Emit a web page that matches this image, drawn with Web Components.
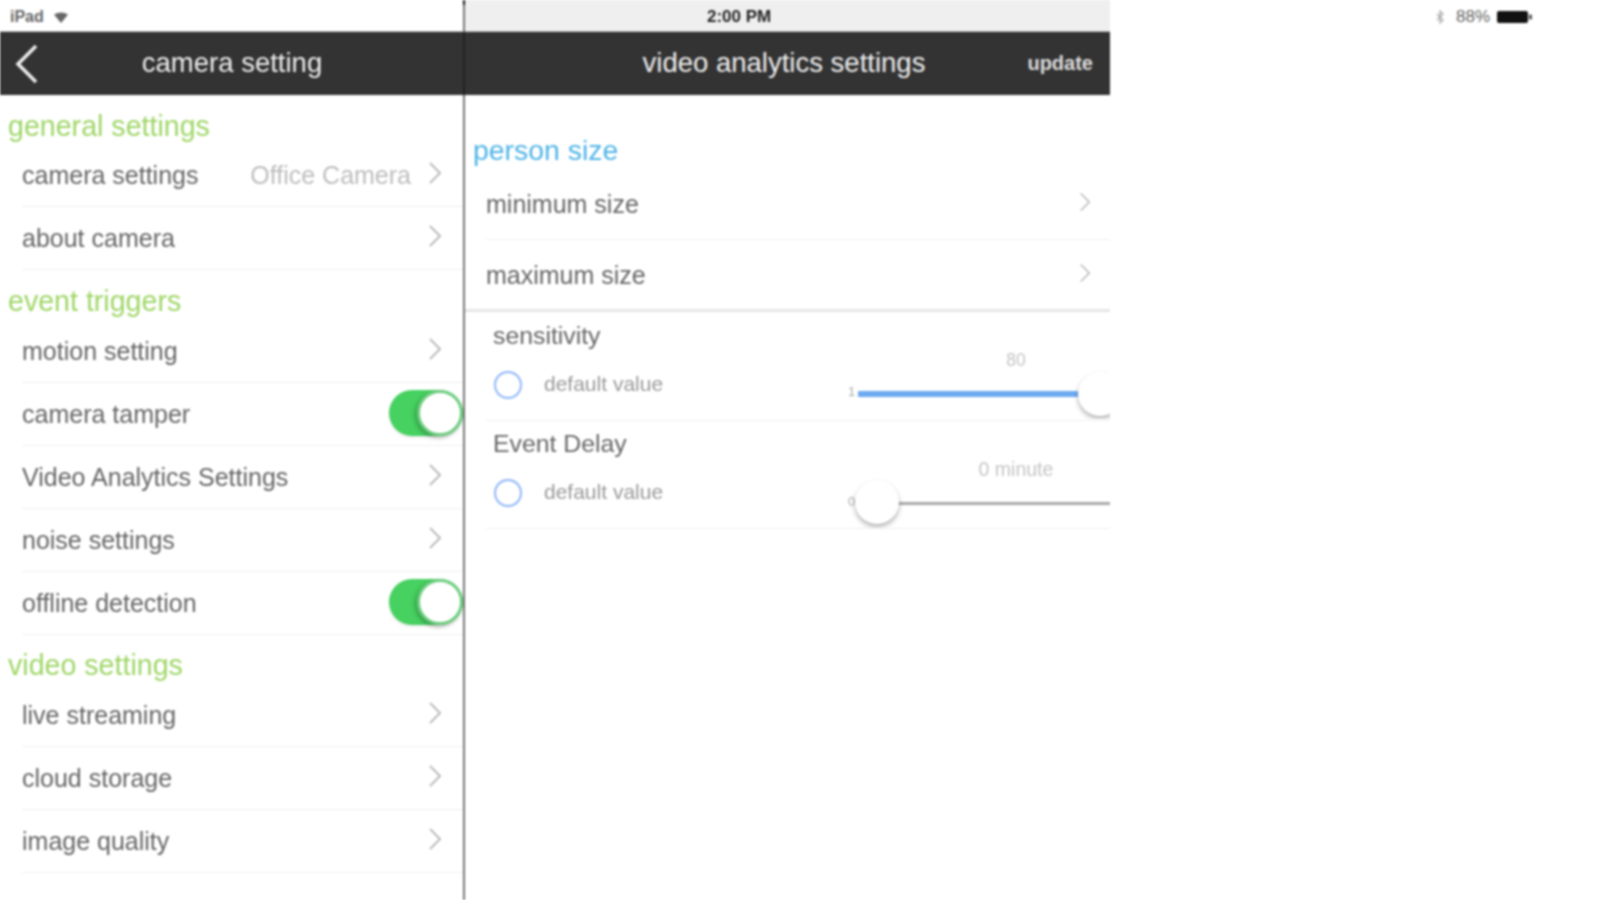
<!DOCTYPE html>
<html lang="en"><head><meta charset="utf-8"><title>camera setting</title>
<style>
html,body{margin:0;background:#fff;overflow:hidden}
body{font-family:"Liberation Sans",Arial,sans-serif}
</style></head>
<body>
<ipad-screen>
  <settings-pane slot="left" style="width:463px">
    <status-strip slot="status"><span>iPad</span><svg width="14" height="11" viewBox="0 0 14 11" style="margin-left:10px"><path d="M0 2.500Q7-1.500 14 2.500L7 11Z" fill="#666"/></svg></status-strip>
    <nav-bar slot="nav" heading="camera setting" back center="232"></nav-bar>
    <section-heading first>general settings</section-heading>
    <setting-row detail="Office Camera" chevron>camera settings</setting-row>
    <setting-row chevron>about camera</setting-row>
    <section-heading>event triggers</section-heading>
    <setting-row chevron>motion setting</setting-row>
    <setting-row toggle>camera tamper</setting-row>
    <setting-row chevron>Video Analytics Settings</setting-row>
    <setting-row chevron>noise settings</setting-row>
    <setting-row toggle>offline detection</setting-row>
    <section-heading>video settings</section-heading>
    <setting-row chevron>live streaming</setting-row>
    <setting-row chevron>cloud storage</setting-row>
    <setting-row chevron>image quality</setting-row>
  </settings-pane>
  <settings-pane slot="right" style="width:645px">
    <status-strip slot="status" tone="grey"><span style="color:#222;font-weight:bold;margin-left:242px;font-size:17px">2:00 PM</span></status-strip>
    <nav-bar slot="nav" heading="video analytics settings" action="update" center="319"></nav-bar>
    <section-heading blue>person size</section-heading>
    <setting-row wide chevron>minimum size</setting-row>
    <setting-row wide chevron thick>maximum size</setting-row>
    <slider-row heading="sensitivity" value="80" min="1" fill="blue"></slider-row>
    <slider-row heading="Event Delay" value="0 minute" min="0" fill="grey"></slider-row>
  </settings-pane>
  <status-strip slot="tail" align="end"><svg width="8" height="14" viewBox="0 0 8 14" style="margin-right:12px"><path d="M1 4l6 6-3 3V1l3 3-6 6" fill="none" stroke="#aaa" stroke-width="1.200"/></svg><span style="color:#666;font-size:17px">88%</span><svg width="36" height="12" viewBox="0 0 36 12" style="margin-left:7px"><rect x="0" y="0" width="31" height="12" rx="2" fill="#111"/><rect x="32" y="3.500" width="3" height="5" rx="1" fill="#555"/></svg></status-strip>
</ipad-screen>
<script>
const shell = (el, html) => { el.attachShadow({mode:'open'}).innerHTML = html; return el.shadowRoot; };
const chevron = (w,h,stroke,color) => `<svg width="${w}" height="${h}" viewBox="0 0 14 24" aria-hidden="true"><path d="M2 2l10 10-10 10" fill="none" stroke="${color}" stroke-width="${stroke}"/></svg>`;

customElements.define('ipad-screen', class extends HTMLElement {
  constructor(){ super(); shell(this, `<style>
    :host{display:flex;width:1599px;height:900px;overflow:hidden;filter:blur(1.1px);color:#555;font-family:"Liberation Sans",Arial,sans-serif}
    .divider{width:2px;flex:none;background:linear-gradient(#111 0 5px,#777 5px 32px,#222 32px 95px,#777 95px)}
    .tail{flex:1;min-width:0}
  </style><slot name="left"></slot><div class="divider"></div><slot name="right"></slot><div class="tail"><slot name="tail"></slot></div>`); }
});

customElements.define('settings-pane', class extends HTMLElement {
  constructor(){ super(); shell(this, `<style>
    :host{display:flex;flex-direction:column;flex:none;height:900px;position:relative}
    .body{display:flex;flex-direction:column}
  </style><slot name="status"></slot><slot name="nav"></slot><div class="body"><slot></slot></div>`); }
});

customElements.define('status-strip', class extends HTMLElement {
  constructor(){ super(); shell(this, `<style>
    :host{display:flex;align-items:center;height:32px;box-sizing:border-box;padding:2px 0 0 10px;font-size:16px;color:#666;font-weight:bold;background:#fff}
    :host([tone=grey]){background:#efefef;padding-left:0}
    :host([align=end]){justify-content:flex-end;padding:2px 66px 0 0;font-weight:normal}
  </style><slot></slot>`); }
});

customElements.define('nav-bar', class extends HTMLElement {
  connectedCallback(){
    const back = this.hasAttribute('back') ? `<svg class="back" width="24" height="40" viewBox="0 0 24 40"><path d="M21 2L3 20l18 18" fill="none" stroke="#eee" stroke-width="3.500"/></svg>` : '';
    const act = this.getAttribute('action');
    shell(this, `<style>
      :host{display:grid;grid-template-columns:1fr;align-items:center;height:63px;background:#333;color:#eee;border-top:1px solid #bbb;margin-top:-1px;position:relative}
      .t{grid-area:1/1;font-size:27.500px;text-align:center;width:${2*this.getAttribute('center')}px;margin-top:-2px}
      .back{grid-area:1/1;margin-left:15px}
      .a{grid-area:1/1;justify-self:end;margin-right:17px;font-size:20px;font-weight:bold;color:#ddd}
    </style>${back}<div class="t">${this.getAttribute('heading')}</div>${act?`<div class="a">${act}</div>`:''}`);
  }
});

customElements.define('section-heading', class extends HTMLElement {
  constructor(){ super(); shell(this, `<style>
    :host{display:flex;align-items:flex-end;height:49.500px;box-sizing:border-box;padding:0 0 3px 8px;font-size:28.600px;line-height:32px;color:#9fd668}
    :host([first]){height:49px;padding-bottom:2px}
    :host([blue]){height:73px;color:#4fb4e8;padding-bottom:2px;font-size:28.400px}
  </style><slot></slot>`); }
});

customElements.define('toggle-switch', class extends HTMLElement {
  constructor(){ super(); shell(this, `<style>
    :host{display:block;width:74px;height:46px;margin-top:-2px;border-radius:23px;background:#46d160;position:relative;box-shadow:0 2px 3px rgba(0,0,0,.08)}
    .k{position:absolute;right:0;top:0;width:46px;height:46px;box-sizing:border-box;border-radius:50%;background:#fff;border:3px solid #6fce80;box-shadow:-2px 2px 4px rgba(0,0,0,.25)}
  </style><div class="k"></div>`); }
});

customElements.define('setting-row', class extends HTMLElement {
  connectedCallback(){
    const d = this.getAttribute('detail');
    const wide = this.hasAttribute('wide');
    const end = this.hasAttribute('toggle') ? '<toggle-switch></toggle-switch>'
      : `<span class="c">${wide ? chevron(12,24,1.4,'#aaa') : chevron(14,24,2,'#bbb')}</span>`;
    shell(this, `<style>
      :host{display:block;padding-left:${wide?21:23}px}
      .r{display:flex;align-items:center;height:${wide?71:62}px;border-bottom:1px solid #efefef;font-size:25px;color:#666;padding-right:${this.hasAttribute('toggle')?0:(wide?19:21)}px;margin-left:${wide?0:-1}px}
      :host([thick]){padding-left:0}
      :host([thick]) .r{border-bottom:3px solid #e6e6e6;height:69px;padding-left:21px}
      :host([thick]) .s{padding-top:5px}
      :host([wide]) .s{padding-top:2px}
      .s{flex:1;padding-top:1px}
      .d{color:#bdbdbd;margin-right:17px;padding-top:1px}
      .c{display:flex;margin-top:-4px}
    </style><div class="r"><span class="s"><slot></slot></span>${d?`<span class="d">${d}</span>`:''}${end}</div>`);
  }
});

customElements.define('slider-row', class extends HTMLElement {
  connectedCallback(){
    const blue = this.getAttribute('fill') === 'blue';
    shell(this, `<style>
      :host{display:block;margin-left:13px;height:${blue?109:108}px;box-sizing:border-box;position:relative}
      :host::after{content:"";position:absolute;left:8px;right:0;bottom:0;height:1px;background:#efefef}
      h3{margin:0;padding:${blue?9:8}px 0 0 15px;font-weight:normal;font-size:24.800px;line-height:30px;color:#666}
      .b{display:flex}
      .o{display:flex;flex:1;align-items:flex-start;padding-left:16px;padding-top:20px}
      .radio{width:28px;height:28px;box-sizing:border-box;border:2.500px solid #8fb6f7;border-radius:50%}
      .l{margin-left:22px;font-size:21px;line-height:26px;color:#999}
      .s{width:262px;flex:none;overflow:hidden}
      .v{padding-left:74px;text-align:center;font-size:${blue?17.5:19.5}px;line-height:18px;height:18px;color:#c4c4c4;margin-top:${blue?0:1}px}
      .t{display:flex;align-items:center;height:50px;position:relative}
      .m{width:10px;font-size:13px;color:#aaa;margin-top:${blue?-6:-4}px;flex:none}
      .bar{flex:1;height:${blue?6:3}px;background:${blue?'#6daaf0':'#aaa'};margin:0 ${blue?19:0}px 0 ${blue?0:37}px}
      .k{position:absolute;top:${blue?3:2}px;left:${blue?230:7}px;width:44px;height:44px;border-radius:50%;background:#fff;box-shadow:0 3px 5px rgba(0,0,0,.3)}
    </style><h3>${this.getAttribute('heading')}</h3>
    <div class="b"><div class="o"><span class="radio"></span><span class="l">default value</span></div>
    <div class="s"><div class="v">${this.getAttribute('value')}</div><div class="t"><span class="m">${this.getAttribute('min')}</span><span class="bar"></span><span class="k"></span></div></div></div>`);
  }
});
</script>
</body></html>
